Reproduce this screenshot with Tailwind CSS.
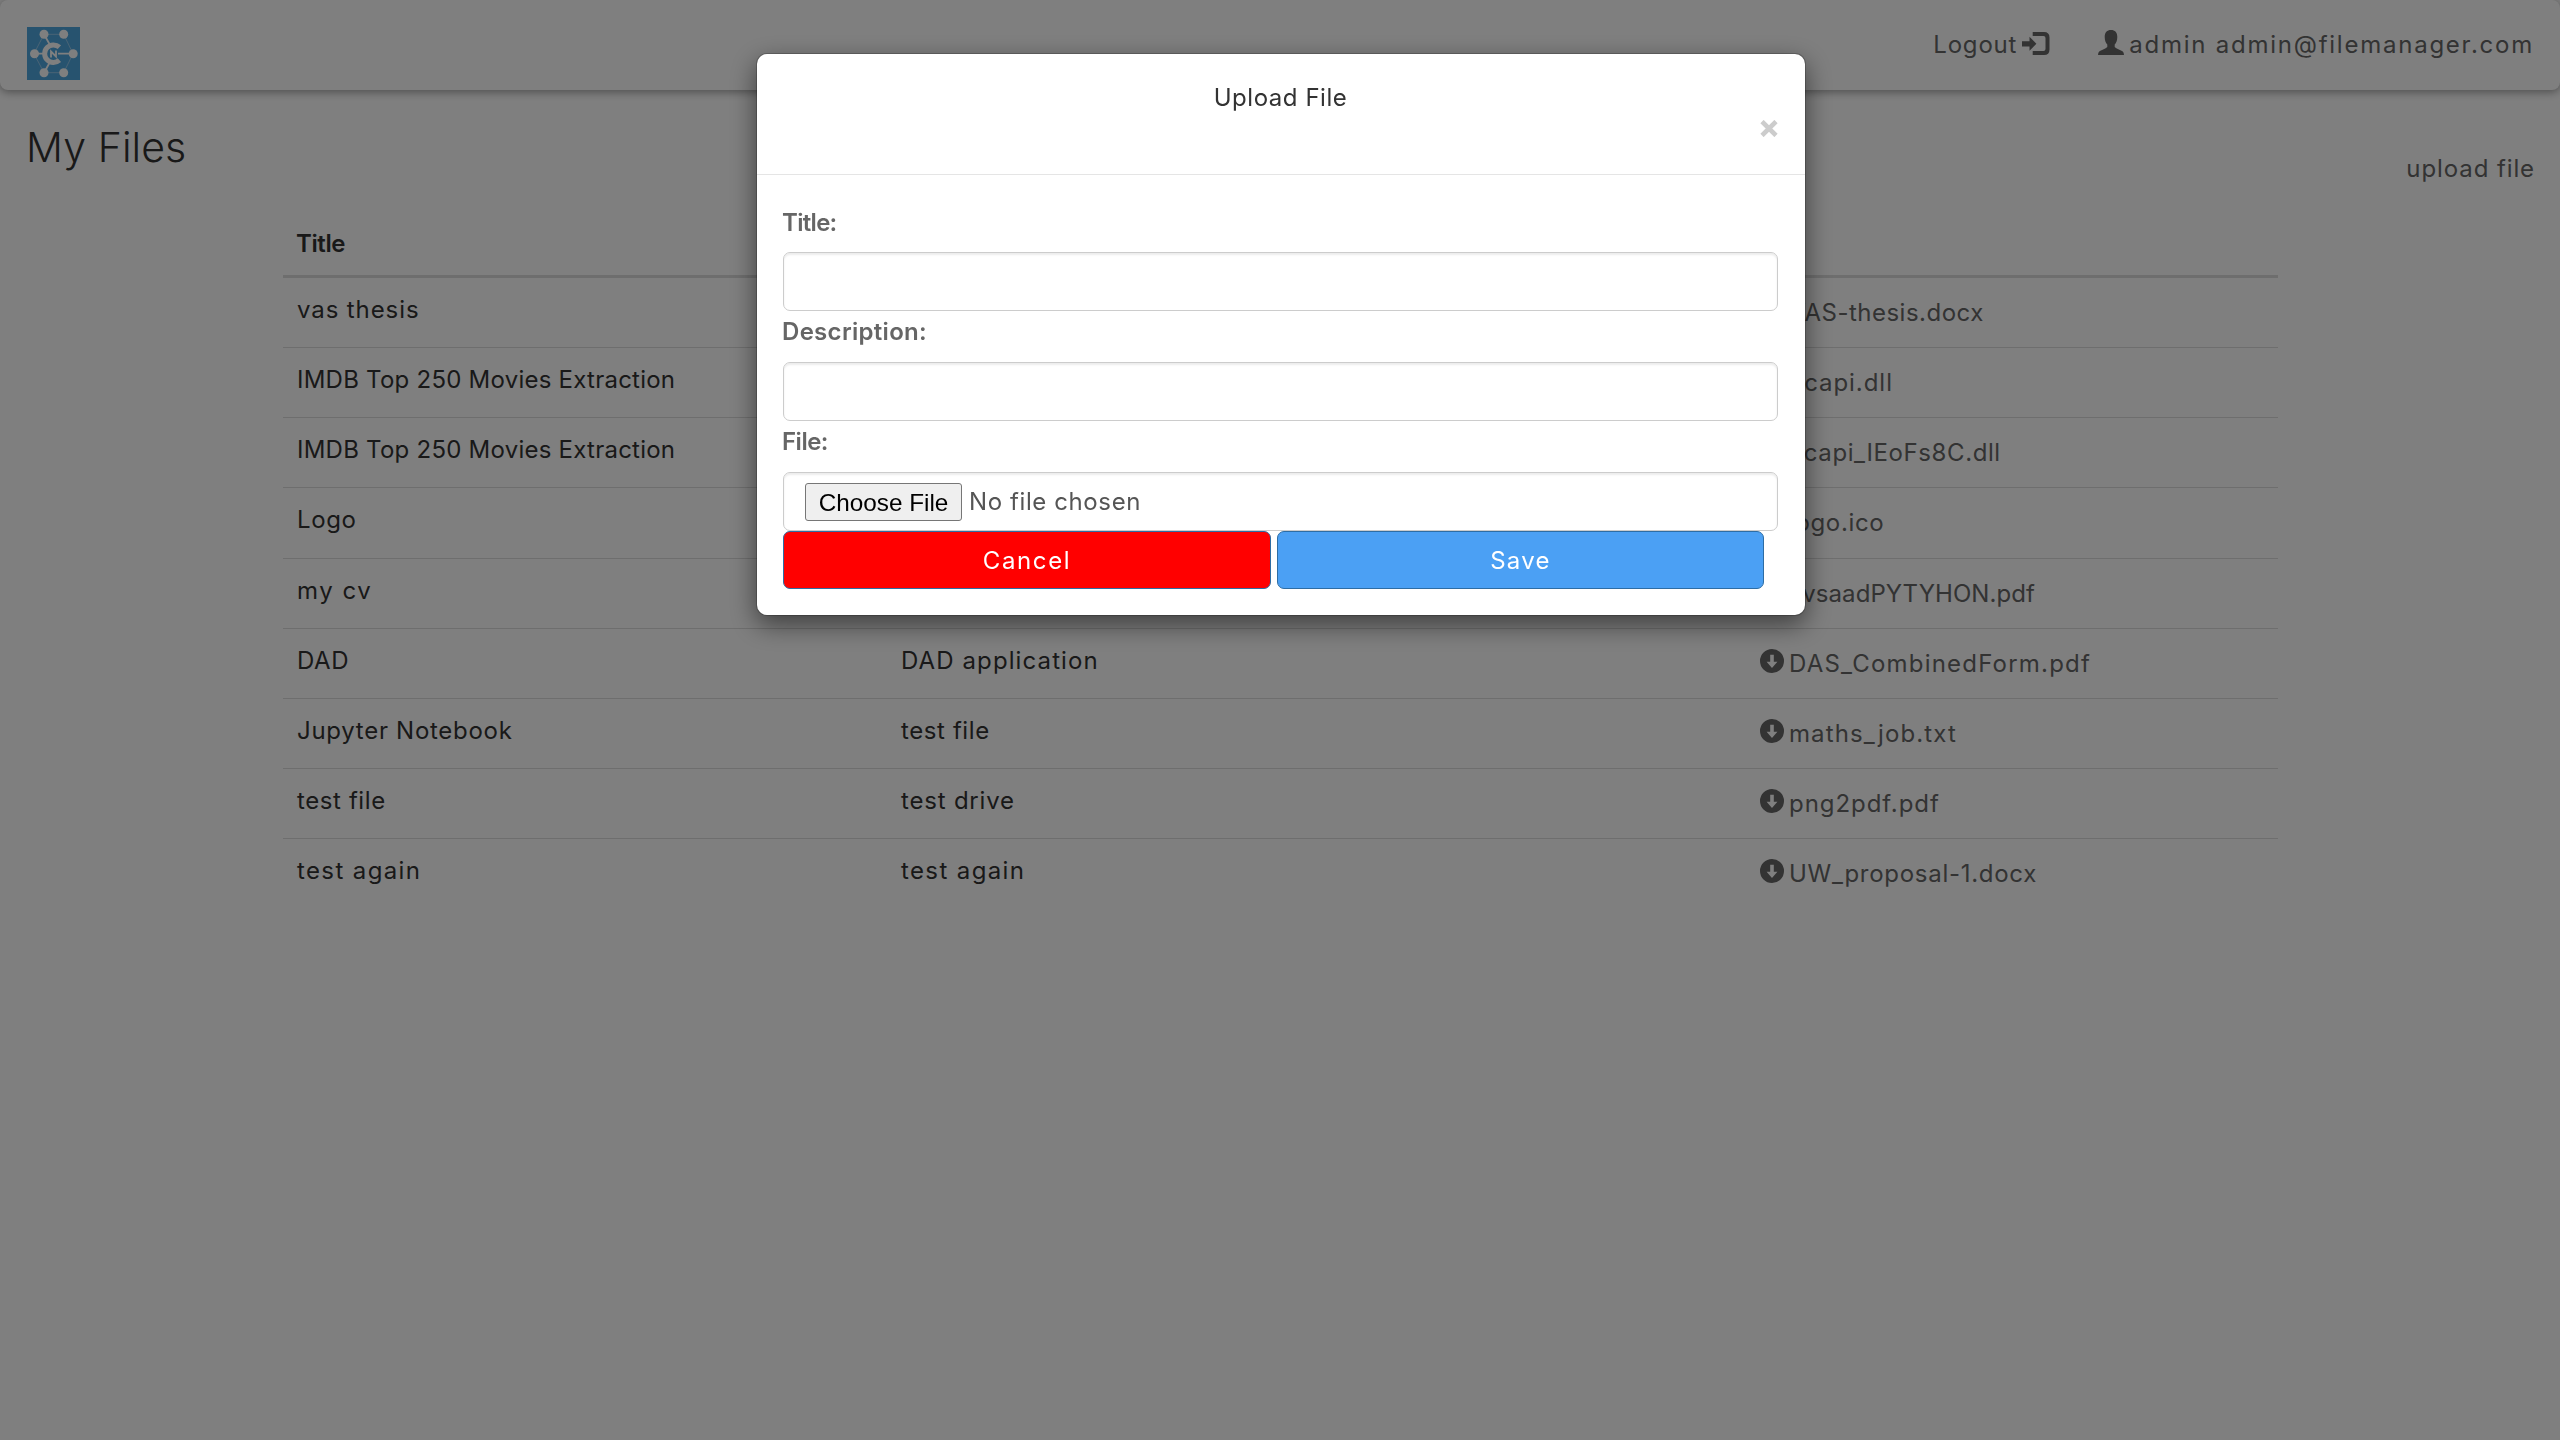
<!DOCTYPE html>
<html lang="en">
<head>
<meta charset="utf-8">
<title>My Files</title>
<script src="https://cdn.jsdelivr.net/npm/@tailwindcss/browser@4"></script>
</head>
<body class="h-[1440px] overflow-hidden bg-white font-[Inter,sans-serif] text-[24px] leading-[35px] font-normal text-[#333] whitespace-nowrap">

<svg class="hidden">
  <symbol id="down" viewBox="0 0 24 24"><path fill="currentColor" fill-rule="evenodd" d="M12 0a12 12 0 1 1 0 24a12 12 0 1 1 0-24zM10.2 5.8v6.9H6.6L12 18.9l5.4-6.2h-3.6V5.8z"/></symbol>
</svg>

<nav class="flex h-[90px] justify-between rounded-[8px] bg-white pl-[27px] pr-[26px] shadow-[0_2px_10px_rgba(0,0,0,0.4)]">
  <svg class="mt-[27px] h-[53px] w-[53px]" viewBox="0 0 53 53">
    <rect width="53" height="53" fill="#4ea6de"/>
    <path d="M17 7.3H36.7L46 26.7L36.7 45.7H17L7 26.7z" fill="none" stroke="#a6d0ee" stroke-width="0.8"/>
    <path d="M17 7.3L23 18M17 45.7L23 35M7 26.7H17M31 26.7H46" stroke="#fff" stroke-width="1.8"/>
    <g fill="#fff"><circle cx="17" cy="7.3" r="4.5"/><circle cx="36.7" cy="7.3" r="4.5"/><circle cx="7.5" cy="26.7" r="4.5"/><circle cx="46.2" cy="26.7" r="4.5"/><circle cx="17" cy="45.7" r="4.5"/><circle cx="36.7" cy="45.7" r="4.5"/></g>
    <path d="M32.4 20.2A8.8 8.8 0 1 0 32.4 33.2" fill="none" stroke="#fff" stroke-width="5"/>
    <path d="M24 30.5V24.5L29 29.5V23.5" fill="none" stroke="#fff" stroke-width="1.8"/>
  </svg>
  <div class="flex pt-[27px] text-[#666]">
    <span class="tracking-[0.8px]">Logout</span>
    <svg class="ml-[5px] mt-[5px] h-[23px] w-[28px]" viewBox="0 0 28 23"><path fill="currentColor" d="M0 9.3H7.5V4.8L14.4 11.8L7.5 18.8V14.6H0zM10.7 0H22Q27.5 0 27.5 5.500V17.500Q27.500 23 22 23H10.700V19H21.500Q23.500 19 23.500 17V6Q23.500 4 21.500 4H10.700z"/></svg>
    <svg class="ml-[48px] mt-[3px] h-[25px] w-[26px]" viewBox="0 0 26 25"><path fill="currentColor" d="M13 0C17 0 19.300 2.500 19.300 7C19.300 10.500 18.200 13 16.700 14.500V17C18.500 18.700 22 19.700 24.500 21.200Q26 22.200 26 25H0Q0 22.200 1.500 21.200C4 19.700 7.500 18.700 9.300 17V14.500C7.800 13 6.700 10.500 6.700 7C6.700 2.500 9 0 13 0z"/></svg>
    <span class="ml-[5px] tracking-[1.76px]">admin admin@filemanager.com</span>
  </div>
</nav>

<div class="flex h-[115px] justify-between pl-[26px] pr-[25px]">
  <h1 class="pt-[27px] text-[41px] leading-[60px] font-light tracking-[0.1px]">My Files</h1>
  <a class="pt-[61px] tracking-[0.9px] text-[#666]">upload file</a>
</div>

<section class="ml-[283px] w-[1995px]">
  <div class="h-[73px] border-b-[3px] border-[#ddd] pl-[13px] pt-[21px] font-semibold tracking-[-0.4px]">Title</div>
  <div class="grid h-[69px] grid-cols-[618px_859px_1fr]"><div class="pl-[14px] pt-[14px] tracking-[0.9px]">vas thesis</div><div></div><a class="flex pt-[17px] text-[#666]"><svg class="mt-[3px] mr-[5px] h-[24px] w-[24px]"><use href="#down"/></svg><span class="tracking-[0.5px]">VAS-thesis.docx</span></a></div>
  <div class="grid h-[70.2px] grid-cols-[618px_859px_1fr] border-t border-[#ddd]"><div class="pl-[14px] pt-[14px] tracking-[0.24px]">IMDB Top 250 Movies Extraction</div><div></div><a class="flex pt-[17px] text-[#666]"><svg class="mt-[3px] mr-[5px] h-[24px] w-[24px]"><use href="#down"/></svg><span class="tracking-[0.95px]">ncapi.dll</span></a></div>
  <div class="grid h-[70.2px] grid-cols-[618px_859px_1fr] border-t border-[#ddd]"><div class="pl-[14px] pt-[14px] tracking-[0.24px]">IMDB Top 250 Movies Extraction</div><div></div><a class="flex pt-[17px] text-[#666]"><svg class="mt-[3px] mr-[5px] h-[24px] w-[24px]"><use href="#down"/></svg><span class="tracking-[0.6px]">ncapi_IEoFs8C.dll</span></a></div>
  <div class="grid h-[70.2px] grid-cols-[618px_859px_1fr] border-t border-[#ddd]"><div class="pl-[14px] pt-[14px] tracking-[0.6px]">Logo</div><div></div><a class="flex pt-[17px] text-[#666]"><svg class="mt-[3px] mr-[5px] h-[24px] w-[24px]"><use href="#down"/></svg><span class="tracking-[0.65px]">logo.ico</span></a></div>
  <div class="grid h-[70.2px] grid-cols-[618px_859px_1fr] border-t border-[#ddd]"><div class="pl-[14px] pt-[14px] tracking-[1.55px]">my cv</div><div></div><a class="flex pt-[17px] text-[#666]"><svg class="mt-[3px] mr-[5px] h-[24px] w-[24px]"><use href="#down"/></svg><span class="tracking-[0.06px]">cvsaadPYTYHON.pdf</span></a></div>
  <div class="grid h-[70.2px] grid-cols-[618px_859px_1fr] border-t border-[#ddd]"><div class="pl-[14px] pt-[14px] tracking-[0.6px]">DAD</div><div class="pt-[14px] tracking-[1.1px]">DAD application</div><a class="flex pt-[17px] text-[#666]"><svg class="mt-[3px] mr-[5px] h-[24px] w-[24px]"><use href="#down"/></svg><span class="tracking-[1.2px]">DAS_CombinedForm.pdf</span></a></div>
  <div class="grid h-[70.2px] grid-cols-[618px_859px_1fr] border-t border-[#ddd]"><div class="pl-[14px] pt-[14px] tracking-[0.72px]">Jupyter Notebook</div><div class="pt-[14px] tracking-[0.6px]">test file</div><a class="flex pt-[17px] text-[#666]"><svg class="mt-[3px] mr-[5px] h-[24px] w-[24px]"><use href="#down"/></svg><span class="tracking-[1.1px]">maths_job.txt</span></a></div>
  <div class="grid h-[70.2px] grid-cols-[618px_859px_1fr] border-t border-[#ddd]"><div class="pl-[14px] pt-[14px] tracking-[0.6px]">test file</div><div class="pt-[14px] tracking-[0.8px]">test drive</div><a class="flex pt-[17px] text-[#666]"><svg class="mt-[3px] mr-[5px] h-[24px] w-[24px]"><use href="#down"/></svg><span class="tracking-[0.95px]">png2pdf.pdf</span></a></div>
  <div class="grid h-[70.2px] grid-cols-[618px_859px_1fr] border-t border-[#ddd]"><div class="pl-[14px] pt-[14px] tracking-[1.38px]">test again</div><div class="pt-[14px] tracking-[1.38px]">test again</div><a class="flex pt-[17px] text-[#666]"><svg class="mt-[3px] mr-[5px] h-[24px] w-[24px]"><use href="#down"/></svg><span class="tracking-[0.72px]">UW_proposal-1.docx</span></a></div>
</section>

<div class="fixed inset-0 flex items-start justify-center bg-black/50 pl-[2px] pt-[53px]">
  <div class="h-[563px] w-[1050px] rounded-[11px] border border-black/20 bg-white bg-clip-padding shadow-[0_9px_26px_rgba(0,0,0,0.5)]">
    <header class="flex h-[121px] flex-col border-b border-[#e5e5e5] pl-[26px] pr-[27px] pt-[26px]">
      <h2 class="text-center tracking-[0.55px]">Upload File</h2>
      <svg class="mt-[5px] h-[17px] w-[18px] self-end" viewBox="0 0 18 17"><path d="M2 1.500L16 15.500M16 1.500L2 15.500" stroke="#ccc" stroke-width="4.600"/></svg>
    </header>
    <form class="flex flex-col pl-[26px] pr-[27px] pt-[30px]">
      <label class="-ml-px h-[47px] font-semibold tracking-[-0.7px] text-[#666]">Title:</label>
      <div class="h-[59px] rounded-[7px] border border-[#ccc] shadow-[inset_0_2px_2px_rgba(0,0,0,0.075)]"></div>
      <label class="-ml-px h-[51px] pt-[3px] font-semibold tracking-[0.3px] text-[#666]">Description:</label>
      <div class="h-[59px] rounded-[7px] border border-[#ccc] shadow-[inset_0_2px_2px_rgba(0,0,0,0.075)]"></div>
      <label class="-ml-px h-[51px] pt-[3px] font-semibold tracking-[-0.5px] text-[#666]">File:</label>
      <div class="flex h-[59px] items-start rounded-[7px] border border-[#ccc] pl-[21px] pt-[10px] shadow-[inset_0_2px_2px_rgba(0,0,0,0.075)]">
        <span class="flex h-[38px] w-[157px] items-center justify-center rounded-[3px] border border-[#767676] bg-[#efefef] font-['Liberation_Sans',sans-serif] text-[24.3px] text-black">Choose File</span>
        <span class="ml-[7px] pt-[1px] tracking-[0.6px] text-[#555]">No file chosen</span>
      </div>
      <div class="flex gap-[6px]">
        <button type="button" class="h-[58px] w-[488px] rounded-[7px] border border-[#2e6da4] bg-[#f00] pt-px tracking-[1.6px] text-white">Cancel</button>
        <button type="button" class="h-[58px] w-[487px] rounded-[7px] border border-[#2e6da4] bg-[#4ba0f4] pt-px tracking-[1.3px] text-white">Save</button>
      </div>
    </form>
  </div>
</div>
</body>
</html>
